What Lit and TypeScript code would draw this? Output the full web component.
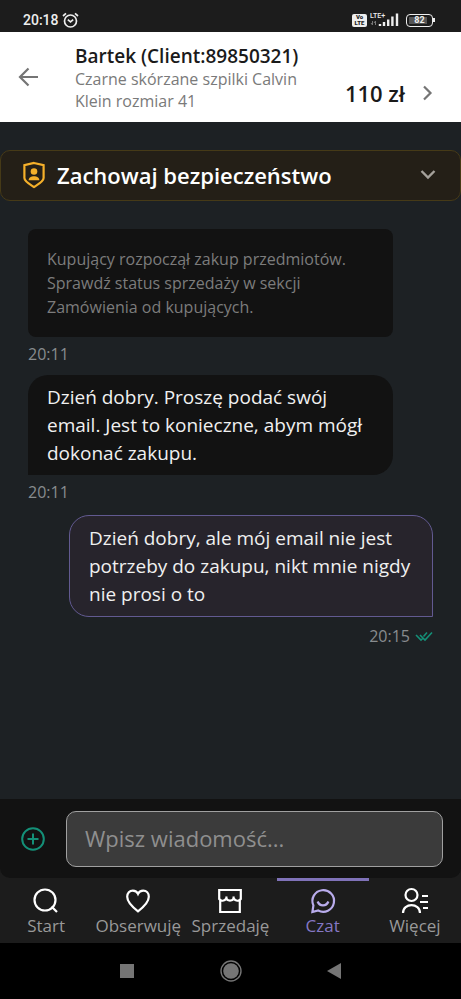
import { LitElement, html, css, svg } from "lit";
import { customElement, state } from "lit/decorators.js";
import { classMap } from "lit/directives/class-map.js";

const navItems = [
  {
    label: "Start",
    icon: svg`<circle cx="13" cy="13" r="10.5"/><path d="M19.5 19.5 L25 25"/>`,
  },
  {
    label: "Obserwuję",
    icon: svg`<path d="M14 24.3 C9 20.5 3.2 15.5 3.2 9.8 C3.2 6.2 5.6 3.6 8.8 3.6 C11.2 3.6 13.2 5 14 6.8 C14.8 5 16.8 3.6 19.2 3.6 C22.4 3.6 24.8 6.2 24.8 9.8 C24.8 15.5 19 20.5 14 24.3 Z"/>`,
  },
  {
    label: "Sprzedaję",
    icon: svg`<path d="M3.2 3 H24.8 V12 C22.8 14.6 19.4 14.2 17.6 11.4 C16 14.4 12 14.4 10.4 11.4 C8.6 14.2 5.2 14.6 3.2 12 Z M4.2 13.5 V25 H23.8 V13.5 M10.4 11.4 V9.4 M17.6 11.4 V9.4"/>`,
  },
  {
    label: "Czat",
    icon: svg`<path d="M3.4 25 L4.4 18.4 A10.8 10.8 0 1 1 9.2 23.5 Z M8.6 14.5 C10.6 19.6 17.4 19.6 19.4 14.5"/>`,
  },
  {
    label: "Więcej",
    icon: svg`<circle cx="10.5" cy="8" r="6"/><path d="M2 26 C2 15.5 19 15.5 19 26 M21 9 H27 M19 15 H27 M22 21 H27"/>`,
  },
];

@customElement("app-root")
export class AppRoot extends LitElement {
  @state() private active = "Czat";

  static styles = css`
    :host {
      display: flex;
      flex-direction: column;
      min-height: 100vh;
      background: #1d2124;
      font-family: "Open Sans", "Noto Sans", sans-serif;
      color: #f0f0f0;
    }
    * {
      box-sizing: border-box;
    }
    button {
      border: 0;
      padding: 0;
      margin: 0;
      background: none;
      font: inherit;
      color: inherit;
      cursor: pointer;
    }
    svg {
      display: block;
      flex: none;
      fill: none;
      stroke: currentColor;
    }
    svg .solid {
      fill: currentColor;
      stroke: none;
    }
    h1,
    p {
      margin: 0;
    }
    .status {
      display: flex;
      align-items: center;
      height: 32px;
      padding: 8px 26px 0 23px;
      background: #1c1c1c;
      color: #eee;
      font: 500 14px/20px Roboto, sans-serif;
    }
    .status .spacer {
      flex: 1;
    }
    .status .alarm {
      margin-left: 3px;
    }
    .volte {
      display: grid;
      width: 15px;
      height: 13px;
      border-radius: 2px;
      background: #eee;
      color: #1c1c1c;
      font: 900 6px/6px Roboto, sans-serif;
      text-align: center;
    }
    .signal {
      margin: 0 6px 0 3px;
    }
    .lte {
      font: 500 7px Roboto, sans-serif;
    }
    .battery {
      display: flex;
      align-items: center;
    }
    .cell {
      width: 27px;
      height: 13px;
      border: 1px solid #eee;
      border-radius: 4px;
      background: linear-gradient(#555, #555) 2px 2px / 18px 7px no-repeat;
      font: 700 9px/11px Roboto, sans-serif;
      text-align: center;
    }
    .tip {
      width: 2px;
      height: 4px;
      background: #eee;
    }
    .header {
      display: flex;
      align-items: center;
      height: 90px;
      padding: 0 26px 0 18px;
      background: #fff;
      color: #1a1a1a;
    }
    .back {
      color: #757575;
      margin-right: 36px;
    }
    .who {
      flex: 1;
      min-width: 0;
      padding-top: 2px;
    }
    h1 {
      font-size: 19px;
      line-height: 24px;
      font-weight: 600;
      white-space: nowrap;
    }
    .item {
      font-size: 16px;
      line-height: 22px;
      color: #7a7a7a;
      width: 240px;
    }
    .price {
      display: flex;
      align-items: center;
      gap: 16px;
      padding-top: 32px;
      font-size: 22px;
      line-height: 28px;
      font-weight: 600;
      white-space: nowrap;
    }
    .price svg {
      color: #757575;
    }
    .safety {
      display: flex;
      align-items: center;
      width: 100%;
      height: 51px;
      margin: 28px 0;
      padding: 0 24px 2px 21px;
      border: 1px solid #463a17;
      border-radius: 10px;
      background: #241f17;
      color: #fff;
      font-size: 22px;
      line-height: 28px;
      font-weight: 600;
      text-align: left;
    }
    .safety .shield {
      color: #f5b02a;
      margin-right: 11px;
    }
    .safety .label {
      flex: 1;
    }
    .safety .chevron {
      color: #a5a19b;
    }
    .chat {
      flex: 1;
      display: flex;
      flex-direction: column;
      padding: 0 28px 28px;
    }
    .bubble {
      margin-right: 40px;
      padding: 8px 19px;
      border-radius: 20px 20px 20px 0;
      background: #121212;
      font-size: 19px;
      line-height: 28px;
    }
    .bubble.system {
      padding: 18px 19px;
      border-radius: 8px;
      color: #7c7c7c;
      font-size: 16px;
      line-height: 24px;
    }
    .bubble.own {
      margin: 2px 0 0 41px;
      border: 1px solid #625a91;
      border-radius: 20px 20px 0 20px;
      background: #27242c;
    }
    .time {
      display: flex;
      align-items: center;
      gap: 5px;
      padding: 6px 0 10px;
      color: #888c8f;
      font-size: 16px;
      line-height: 22px;
    }
    .time.own {
      justify-content: flex-end;
      padding-top: 8px;
    }
    .time svg {
      color: #149078;
    }
    .dock {
      background: #1c1c1c;
    }
    .composer {
      display: flex;
      align-items: center;
      gap: 20px;
      height: 79px;
      padding: 0 18px 0 20px;
      border-radius: 0 0 10px 10px;
      background: #121212;
    }
    .add {
      color: #149078;
    }
    .field {
      flex: 1;
      min-width: 0;
      height: 56px;
      padding: 0 18px 2px;
      border: 1px solid #a0a0a0;
      border-radius: 10px;
      background: #3b3b3b;
      color: #f0f0f0;
      font: 400 22px/28px "Open Sans", "Noto Sans", sans-serif;
    }
    .field::placeholder {
      color: #8f8f8f;
      opacity: 1;
    }
    .nav {
      display: grid;
      grid-template-columns: repeat(5, 1fr);
      height: 65px;
    }
    .tab {
      display: flex;
      flex-direction: column;
      align-items: center;
      padding-top: 6px;
      border-top: 3px solid transparent;
      color: #999;
      font-size: 17px;
      line-height: 22px;
    }
    .tab svg {
      color: #fff;
    }
    .tab.active {
      border-top-color: #7f72b8;
      color: #8577c4;
    }
    .tab.active svg {
      color: #b9acec;
    }
    .system-bar {
      display: flex;
      align-items: center;
      justify-content: center;
      gap: 80px;
      height: 56px;
      background: #000;
      color: #757575;
    }
  `;

  render() {
    return html`
      <div class="status">
        <span>20:18</span>
        <svg class="alarm" width="17" height="17" viewBox="0 0 17 17" stroke-width="1.7">
          <circle cx="8.5" cy="9" r="6" />
          <path d="M5.8 7.6 L8.5 9.8 L11.2 7.6 M1 4 L4 1.4 M16 4 L13 1.4" />
        </svg>
        <span class="spacer"></span>
        <span class="volte"><span>Vo</span><span>LTE</span></span>
        <svg class="signal" width="30" height="16" viewBox="0 0 30 16">
          <text class="solid lte" x="0" y="6">LTE+</text>
          <path stroke="#777" d="M2.5 9 V13 M5.5 9 V13 M1 11 L2.5 13 M4 11 L5.5 9" />
          <path stroke-width="2.4" d="M10 14 V12 M14 14 V10 M18.2 14 V7.5 M22.4 14 V4.5 M27 14 V1.5" />
        </svg>
        <span class="battery"><span class="cell">82</span><span class="tip"></span></span>
      </div>

      <header class="header">
        <button class="back" aria-label="Wstecz">
          <svg width="21" height="20" viewBox="0 0 21 20" stroke-width="2.2">
            <path d="M20 10 H2.5 M10.5 1.5 L2 10 L10.5 18.5" />
          </svg>
        </button>
        <div class="who">
          <h1>Bartek (Client:89850321)</h1>
          <p class="item">Czarne skórzane szpilki Calvin Klein rozmiar 41</p>
        </div>
        <div class="price">
          <span>110 zł</span>
          <svg width="14" height="16" viewBox="0 0 14 16" stroke-width="2.2">
            <path d="M3 1.5 L9.5 8 L3 14.5" />
          </svg>
        </div>
      </header>

      <button class="safety">
        <svg class="shield" width="24" height="28" viewBox="0 0 24 28" stroke-width="2.2">
          <path d="M12 2 L21.6 4.2 V17 C21.6 20.5 16 23.4 12 26 C8 23.4 2.4 20.5 2.4 17 V4.2 Z" />
          <circle class="solid" cx="12" cy="10.5" r="3.3" />
          <path class="solid" d="M6.6 19.3 C6.6 13.8 17.4 13.8 17.4 19.3 Z" />
        </svg>
        <span class="label">Zachowaj bezpieczeństwo</span>
        <svg class="chevron" width="16" height="12" viewBox="0 0 16 12" stroke-width="2.4">
          <path d="M1.5 2 L8 8.5 L14.5 2" />
        </svg>
      </button>

      <main class="chat">
        <p class="bubble system">
          Kupujący rozpoczął zakup przedmiotów. Sprawdź status sprzedaży w
          sekcji Zamówienia od kupujących.
        </p>
        <div class="time">20:11</div>
        <p class="bubble">
          Dzień dobry. Proszę podać swój email. Jest to konieczne, abym mógł
          dokonać zakupu.
        </p>
        <div class="time">20:11</div>
        <p class="bubble own">
          Dzień dobry, ale mój email nie jest potrzeby do zakupu, nikt mnie
          nigdy nie prosi o to
        </p>
        <div class="time own">
          <span>20:15</span>
          <svg width="18" height="11" viewBox="0 0 18 11" stroke-width="1.6">
            <path d="M1 4 L6 9 L8 7 M5 4 L10 9 L17 1.5 M8.5 5.5 L12 1.5" />
          </svg>
        </div>
      </main>

      <div class="dock">
        <form class="composer" @submit=${(e: Event) => e.preventDefault()}>
          <button class="add" type="button" aria-label="Dodaj">
            <svg width="26" height="26" viewBox="0 0 26 26" stroke-width="2">
              <circle cx="13" cy="13" r="10.8" />
              <path d="M13 7.5 V18.5 M7.5 13 H18.5" />
            </svg>
          </button>
          <input class="field" type="text" aria-label="Wiadomość" placeholder="Wpisz wiadomość..." />
        </form>
        <nav class="nav">
          ${navItems.map(
            (item) => html`
              <button
                class=${classMap({ tab: true, active: item.label === this.active })}
                @click=${() => (this.active = item.label)}
              >
                <svg width="28" height="28" viewBox="0 0 28 28" stroke-width="2.2">${item.icon}</svg>
                <span>${item.label}</span>
              </button>
            `,
          )}
        </nav>
      </div>

      <div class="system-bar">
        <button aria-label="Ostatnie">
          <svg width="24" height="24" viewBox="0 0 24 24"><rect class="solid" x="5" y="5" width="14" height="14" /></svg>
        </button>
        <button aria-label="Ekran główny">
          <svg width="24" height="24" viewBox="0 0 24 24">
            <circle cx="12" cy="12" r="10" stroke-width="1.4" />
            <circle class="solid" cx="12" cy="12" r="7.8" />
          </svg>
        </button>
        <button aria-label="Cofnij">
          <svg width="24" height="24" viewBox="0 0 24 24"><path class="solid" d="M4 12 L18 4 V20 Z" /></svg>
        </button>
      </div>
    `;
  }
}
